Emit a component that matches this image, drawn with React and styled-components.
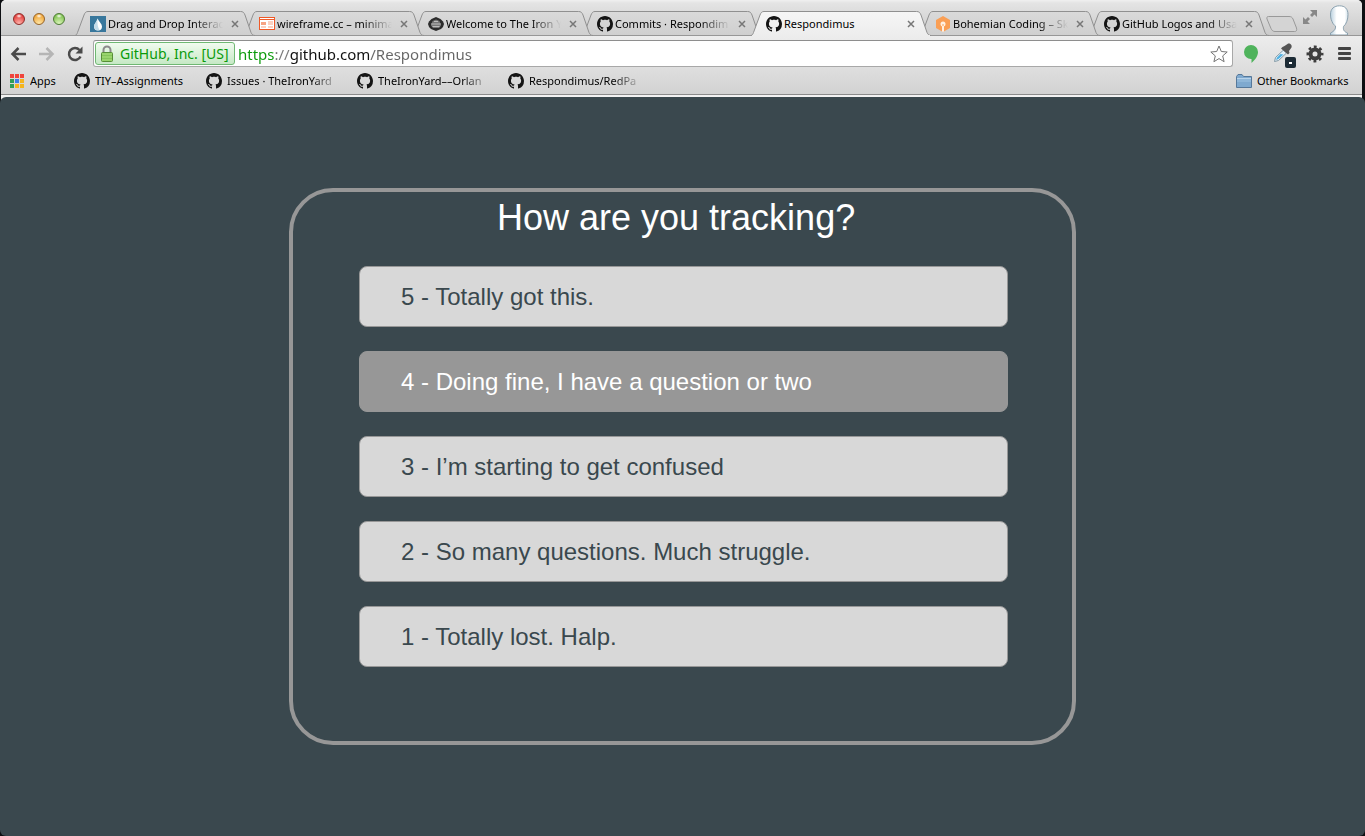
import React, { useState } from "react";
import styled, { createGlobalStyle, css } from "styled-components";

const GlobalStyle = createGlobalStyle`
  * { box-sizing: border-box; }
  body { margin: 0; background: #0d0f12; }
  button { font: inherit; color: inherit; border: 0; padding: 0; background: none; cursor: pointer; }
  a { color: inherit; text-decoration: none; }
`;

const uiFont = `"Noto Sans", "Open Sans", sans-serif`;

const Window = styled.div`
  min-height: 100vh;
  display: flex;
  flex-direction: column;
`;

const Chrome = styled.header`
  height: 104px;
  margin: 0 3px -7px 1px;
  border-radius: 5px 5px 0 0;
  overflow: hidden;
  background: #f2f2f2;
  font-family: ${uiFont};
  font-size: 11px;
  line-height: 16px;
  color: #000;
`;

const TabStrip = styled.div`
  height: 36px;
  display: flex;
  align-items: flex-start;
  padding: 11px 12px 0 0;
  background: linear-gradient(#f0f0f0, #e4e4e4 3px, #c9c9c9);
  box-shadow: inset 0 -1px #979797;
`;

const Lights = styled.div`
  display: flex;
  gap: 8px;
  width: 76px;
  padding: 2px 0 0 12px;
  flex: none;
`;

const lights = {
  red: ["#8c2b28", "#e4423f", "#ffb5ad"],
  amber: ["#96642a", "#f0a83c", "#ffe7a8"],
  green: ["#4d7a35", "#83c455", "#dcf5bb"],
};

const Light = styled.button`
  width: 12px;
  height: 12px;
  border-radius: 50%;
  border: 1px solid ${(p) => lights[p.$tone][0]};
  background:
    radial-gradient(ellipse 3px 2px at 50% 20%, #fff, transparent),
    radial-gradient(circle at 50% 95%, ${(p) => lights[p.$tone][2]}, ${(p) => lights[p.$tone][1]} 75%);
`;

const TabList = styled.nav`
  display: flex;
  flex: 0 1 1183px;
  min-width: 0;
`;

const Tab = styled.div`
  position: relative;
  z-index: ${(p) => p.$z};
  flex: 1 1 169px;
  min-width: 0;
  height: 25px;
  display: flex;
  align-items: center;
  padding: 1px 6px 0 13px;
  gap: 2px;
`;

const TabShape = styled.svg`
  position: absolute;
  left: -2px;
  top: 0;
  z-index: -1;
  width: calc(100% + 12px);
  height: 25px;
`;

const Fade = styled.span`
  flex: 1;
  min-width: 0;
  overflow: hidden;
  white-space: nowrap;
  ${(p) =>
    p.$fade &&
    css`
      mask-image: linear-gradient(to left, transparent, #000 30px);
    `}
`;

const TabLink = styled.a`
  flex: 1;
  min-width: 0;
  display: flex;
  align-items: center;
  gap: 2px;
  margin-right: 6px;
`;

const CloseButton = styled.button`
  width: 9px;
  height: 16px;
  display: flex;
  align-items: center;
  flex: none;
`;

const Icon = styled.svg`
  display: block;
  flex: none;
`;

const NewTab = styled.button`
  margin: 4px 0 0 5px;
  height: 18px;
  flex: none;
`;

const StripEnd = styled.div`
  display: flex;
  gap: 10px;
  margin: -6px 0 0 auto;
  align-items: flex-start;
`;

const Expand = styled.button`
  padding-top: 4px;
`;

const Toolbar = styled.div`
  height: 59px;
  background: linear-gradient(#ededed, #d2d2d2);
  border-bottom: 1px solid #8b8b8b;
`;

const AddressRow = styled.form`
  height: 31px;
  padding: 4px 10px 0 9px;
  display: flex;
  align-items: center;
  margin: 0;
`;

const NavButtons = styled.div`
  display: flex;
  gap: 12px;
  width: 83px;
  flex: none;
`;

const Omnibox = styled.div`
  flex: 1;
  min-width: 0;
  height: 27px;
  display: flex;
  align-items: center;
  padding: 0 4px 0 1px;
  border: 1px solid #a8a8a8;
  border-top-color: #8e8e8e;
  border-radius: 3px;
  background: #fff;
  font-size: 14px;
`;

const Certificate = styled.button`
  height: 23px;
  width: 140px;
  flex: none;
  display: flex;
  align-items: center;
  gap: 7px;
  padding-left: 5px;
  border: 1px solid #6fb873;
  border-radius: 3px;
  background: linear-gradient(#f1fbef, #c6e8c5);
  color: #0a9a0a;
  white-space: nowrap;
`;

const AddressInput = styled.input`
  flex: 1;
  min-width: 0;
  border: 0;
  outline: 0;
  padding: 0 0 0 3px;
  height: 23px;
  font: inherit;
  font-size: 15px;
  color: #111;
  -webkit-text-fill-color: transparent;
  background: linear-gradient(
    to right,
    #0a9a0a 40px,
    #777 40px 55px,
    #111 55px 135px,
    #666 135px
  );
  background-clip: text;
`;

const Extensions = styled.div`
  display: flex;
  align-items: center;
  gap: 10px;
  padding-left: 10px;
  flex: none;
`;

const BookmarkBar = styled.nav`
  height: 27px;
  display: flex;
  align-items: center;
  gap: 16px;
  padding: 1px 10px 0 9px;
`;

const Bookmark = styled.a`
  display: flex;
  align-items: center;
  gap: 5px;
  flex: 0 1 ${(p) => p.$width}px;
  min-width: 0;
  &:last-child {
    margin-left: auto;
    flex-shrink: 0;
  }
`;

const Page = styled.main`
  position: relative;
  flex: 1;
  display: flex;
  flex-direction: column;
  align-items: center;
  padding: 91px 24px;
  border-radius: 6px;
  background: #3a484e;
  font-family: "Liberation Sans", Arial, sans-serif;
`;

const Card = styled.section`
  width: 100%;
  max-width: 787px;
  padding: 4px 64px 74px 66px;
  border: 4px solid #979797;
  border-radius: 44px;
`;

const Title = styled.h1`
  margin: 0;
  padding-left: 138px;
  font-size: 36px;
  line-height: 44px;
  font-weight: 400;
  color: #fff;
`;

const Options = styled.div`
  display: flex;
  flex-direction: column;
  gap: 24px;
  margin-top: 26px;
`;

const Option = styled.button`
  height: 61px;
  padding: 0 0 0 41px;
  text-align: left;
  font-size: 24px;
  border: 1px solid #979797;
  border-radius: 8px;
  background: ${(p) => (p.$active ? "#979797" : "#d8d8d8")};
  color: ${(p) => (p.$active ? "#fff" : "#3a484e")};
`;

const GithubMark = () => (
  <Icon width="16" height="16" viewBox="0 0 16 16" fill="#141414" aria-hidden="true">
    <path d="M8 0C3.58 0 0 3.58 0 8c0 3.54 2.29 6.53 5.47 7.59.4.07.55-.17.55-.38 0-.19-.01-.82-.01-1.49-2.01.37-2.53-.49-2.69-.94-.09-.23-.48-.94-.82-1.13-.28-.15-.68-.52-.01-.53.63-.01 1.08.58 1.23.82.72 1.21 1.87.87 2.33.66.07-.52.28-.87.51-1.07-1.78-.2-3.64-.89-3.64-3.95 0-.87.31-1.59.82-2.15-.08-.2-.36-1.02.08-2.12 0 0 .67-.21 2.2.82.64-.18 1.32-.27 2-.27.68 0 1.36.09 2 .27 1.53-1.04 2.2-.82 2.2-.82.44 1.1.16 1.92.08 2.12.51.56.82 1.27.82 2.15 0 3.07-1.87 3.75-3.65 3.95.29.25.54.73.54 1.48 0 1.07-.01 1.93-.01 2.2 0 .21.15.46.55.38A8.013 8.013 0 0016 8c0-4.42-3.58-8-8-8z" />
  </Icon>
);

const DropIcon = () => (
  <Icon width="16" height="16" viewBox="0 0 16 16" aria-hidden="true">
    <rect width="16" height="16" fill="#38779c" />
    <path d="M7.5 2.5C9 5.500 12 8 12 10.500A4 4 0 0 1 4 10.500C4 8 7 5.500 7.500 2.500z" fill="#fff" />
    <path d="M7.500 2.500C7.500 6 7 10 9.500 14A4 4 0 0 1 4 10.500C4 8 7 5.500 7.500 2.500z" fill="#c3dcea" />
  </Icon>
);

const WireframeIcon = () => (
  <Icon width="16" height="16" viewBox="0 0 16 16" aria-hidden="true">
    <rect x=".5" y="1.500" width="15" height="12" fill="#fff" stroke="#ef5a28" />
    <path d="M1 3.500h14" stroke="#ef5a28" />
    <path d="M2 6h5v3H2zM9 5.500h5v1H9zM9 7.500h5v1H9zM2 10.500h5v1H2zM9 10.500h5v1H9z" fill="#f6a483" />
  </Icon>
);

const IronYardIcon = () => (
  <Icon width="16" height="16" viewBox="0 0 16 16" aria-hidden="true">
    <path d="M8 1l4.500 2L15 5.500l1 2.500-1 3-2 2-5 2-5-2-2-2-1-3 1-2.500L3.500 3z" fill="#2c2c2c" />
    <path d="M4.500 5L8 3.500 11.500 5 13 9.500 11 12H5L3 9.500z" fill="#777" />
    <path d="M3 8h10M4.500 10.500h7M6 5.500h4" stroke="#bdbdbd" />
  </Icon>
);

const BohemianIcon = () => (
  <Icon width="16" height="16" viewBox="0 0 16 16" aria-hidden="true">
    <path d="M8 0l7 4v8l-7 4-7-4V4z" fill="#fa9f55" />
    <circle cx="8" cy="8" r="2.500" fill="#fff0e2" />
    <path d="M7 9h2v6.500l-1 .5-1-.5z" fill="#fff0e2" />
    <path d="M8 8v2" stroke="#fa9f55" />
  </Icon>
);

const AppsIcon = () => {
  const colors = ["#f0443c", "#f0443c", "#f0443c", "#2f9e58", "#3d80e8", "#f5b51e", "#2f9e58", "#f5b51e", "#f5b51e"];
  return (
    <Icon width="15" height="14" viewBox="0 0 15 14" aria-hidden="true">
      {colors.map((c, i) => (
        <rect key={i} x={(i % 3) * 5} y={Math.floor(i / 3) * 5} width="4" height="4" fill={c} />
      ))}
    </Icon>
  );
};

const FolderIcon = () => (
  <Icon width="16" height="14" viewBox="0 0 16 14" aria-hidden="true">
    <path d="M.5 13.500V2.500L2 .5h4l1.500 2h8v11z" fill="#7fa9cf" stroke="#56789a" />
    <path d="M1 4.500h14" stroke="#b8d3ea" />
    <path d="M1 5h14v3H1z" fill="#8fb6d8" />
  </Icon>
);

const tabs = [
  { label: "Drag and Drop Interac", icon: DropIcon },
  { label: "wireframe.cc – minima", icon: WireframeIcon },
  { label: "Welcome to The Iron Y", icon: IronYardIcon },
  { label: "Commits · Respondim", icon: GithubMark },
  { label: "Respondimus", icon: GithubMark, active: true },
  { label: "Bohemian Coding – Sk", icon: BohemianIcon },
  { label: "GitHub Logos and Usa", icon: GithubMark },
];

const bookmarks = [
  { label: "Apps", icon: AppsIcon, width: 48 },
  { label: "TIY–Assignments", icon: GithubMark, width: 116 },
  { label: "Issues · TheIronYard", icon: GithubMark, width: 135, fade: true },
  { label: "TheIronYard––Orlan", icon: GithubMark, width: 135, fade: true },
  { label: "Respondimus/RedPa", icon: GithubMark, width: 135, fade: true },
  { label: "Other Bookmarks", icon: FolderIcon, width: 116 },
];

const options = [
  "5 - Totally got this.",
  "4 - Doing fine, I have a question or two",
  "3 - I’m starting to get confused",
  "2 - So many questions. Much struggle.",
  "1 - Totally lost. Halp.",
];

function BrowserTab({ tab, z }) {
  const TabIcon = tab.icon;
  return (
    <Tab $z={z}>
      <TabShape viewBox="0 0 181 25" preserveAspectRatio="none" aria-hidden="true">
        <defs>
          <linearGradient id={tab.active ? "tabOn" : "tabOff"} x2="0" y2="1">
            <stop stopColor={tab.active ? "#f6f6f6" : "#dadada"} />
            <stop offset="1" stopColor={tab.active ? "#ededed" : "#cfcfcf"} />
          </linearGradient>
        </defs>
        <path
          d="M0 24.500C1.500 24 2 23 2.500 21.500L9 4C10 1.500 11 .5 13 .5H165.500C168 .5 169 1.500 170 4L176 21.500C177 23.500 178 24.500 180 24.500"
          fill={tab.active ? "url(#tabOn)" : "url(#tabOff)"}
          stroke="#909090"
        />
        <path d="M1 24.500H179" stroke={tab.active ? "#ededed" : "#979797"} />
      </TabShape>
      <TabLink href="#">
        <TabIcon />
        <Fade $fade={!tab.active}>{tab.label}</Fade>
      </TabLink>
      <CloseButton type="button" aria-label={`Close ${tab.label}`}>
        <Icon width="8" height="8" viewBox="0 0 8 8" stroke="#777" strokeWidth="1.500">
          <path d="M1 1l6 6M7 1L1 7" />
        </Icon>
      </CloseButton>
    </Tab>
  );
}

export default function App() {
  const [selected, setSelected] = useState(1);
  return (
    <Window>
      <GlobalStyle />
      <Chrome>
        <TabStrip>
          <Lights>
            <Light $tone="red" aria-label="Close window" />
            <Light $tone="amber" aria-label="Minimize window" />
            <Light $tone="green" aria-label="Zoom window" />
          </Lights>
          <TabList>
            {tabs.map((tab, i) => (
              <BrowserTab key={tab.label} tab={tab} z={tab.active ? 20 : 10 - i} />
            ))}
          </TabList>
          <NewTab aria-label="New tab">
            <Icon width="34" height="18" viewBox="0 0 34 18">
              <path d="M3.500 1.500H24C26 1.500 27 2 28 4L31.500 13C32 15.500 31.500 16.500 29.500 16.500H10C8 16.500 7 15.500 6 13.500L2 4C1.500 2.500 2 1.500 3.500 1.500z" fill="#d4d4d4" stroke="#999" />
            </Icon>
          </NewTab>
          <StripEnd>
            <Expand aria-label="Full screen">
              <Icon width="16" height="16" viewBox="0 0 16 16" fill="#888">
                <path d="M8 1h7v7l-2.500-2.500L10 8 8 6l2.500-2.500zM8 15H1V8l2.500 2.500L6 8l2 2-2.500 2.500z" />
              </Icon>
            </Expand>
            <Icon width="22" height="30" viewBox="0 0 22 30" role="img" aria-label="Profile">
              <defs>
                <linearGradient id="face">
                  <stop stopColor="#b9d0de" />
                  <stop offset=".35" stopColor="#fff" />
                  <stop offset=".8" stopColor="#fff" />
                  <stop offset="1" stopColor="#d5e4ec" />
                </linearGradient>
              </defs>
              <path d="M11.500 .8C6 .8 2.500 4 2.500 9c0 3 .3 5 1.500 7.500 1 2.500 2 3.500 3.500 4.500.3 3-1 5-5 7V30h17v-2c-3.500-1.500-4.500-3-4-6.500C18.500 19 20 14 20 9.500 20 4 17 .8 11.500 .8z" fill="url(#face)" stroke="#8aa0ae" />
            </Icon>
          </StripEnd>
        </TabStrip>
        <Toolbar>
          <AddressRow onSubmit={(e) => e.preventDefault()}>
            <NavButtons>
              <button type="button" aria-label="Back">
                <Icon width="16" height="16" viewBox="0 0 16 16" fill="none" stroke="#4b4b4b" strokeWidth="2.500">
                  <path d="M16 8H3M8.500 2L2.500 8l6 6" />
                </Icon>
              </button>
              <button type="button" aria-label="Forward">
                <Icon width="17" height="16" viewBox="0 0 17 16" fill="none" stroke="#b5b5b5" strokeWidth="2.500">
                  <path d="M1 8h13M8.500 2l6 6-6 6" />
                </Icon>
              </button>
              <button type="button" aria-label="Reload">
                <Icon width="16" height="16" viewBox="0 0 16 16" fill="none" stroke="#4b4b4b" strokeWidth="2.500">
                  <path d="M13.500 10.500A6 6 0 1 1 12.500 4" />
                  <path d="M15.500 .5v7h-7z" fill="#4b4b4b" stroke="none" />
                </Icon>
              </button>
            </NavButtons>
            <Omnibox>
              <Certificate type="button">
                <Icon width="12" height="18" viewBox="0 0 12 18">
                  <path d="M2.500 9V5a3.500 3.500 0 0 1 7 0v4" fill="none" stroke="#8b8b8b" strokeWidth="2" />
                  <rect x=".5" y="7.500" width="11" height="9" rx="1" fill="#98d46c" stroke="#568e37" />
                  <path d="M1 10.500h10M1 13.500h10" stroke="#84c45a" />
                </Icon>
                GitHub, Inc. [US]
              </Certificate>
              <AddressInput aria-label="Address" defaultValue="https://github.com/Respondimus" spellCheck="false" />
              <button type="button" aria-label="Bookmark this page">
                <Icon width="18" height="18" viewBox="0 0 18 18" fill="#fff" stroke="#747474" strokeLinejoin="round">
                  <path d="M9 1l2.300 5.500 5.900.5-4.500 3.900 1.400 5.800L9 13.600l-5.100 3.100 1.400-5.800L.8 7l5.900-.5z" />
                </Icon>
              </button>
            </Omnibox>
            <Extensions>
              <button type="button" aria-label="Hangouts">
                <Icon width="16" height="20" viewBox="0 0 16 20" fill="#4fb35c">
                  <path d="M8 1a7 7 0 0 1 7 7c0 4-3 8-6.500 11v-4H8A7 7 0 0 1 8 1z" />
                </Icon>
              </button>
              <button type="button" aria-label="Color picker">
                <Icon width="27" height="28" viewBox="0 0 27 28">
                  <path d="M5.500 21.500l1-4L14.500 10l3 3-8 7.500z" fill="#e4f2fa" stroke="#8199a6" />
                  <path d="M7 20l1-2.500 3.500-3.500 3 .5-5 4.500z" fill="#4fb0e2" />
                  <path d="M13.500 7l2-1 3-2c2-1.500 5 1 4 3.500L20 11l.5 2-1.500 1.500L12 8.500z" fill="#555" />
                  <rect x="16" y="17" width="11" height="11" rx="2" fill="#1c2b35" />
                  <path d="M20 22h3v2h-3z" fill="#fff" />
                </Icon>
              </button>
              <button type="button" aria-label="Extension settings">
                <Icon width="18" height="18" viewBox="0 0 18 18">
                  <circle cx="9" cy="9" r="4.500" fill="none" stroke="#3e3e3e" strokeWidth="4" />
                  <circle cx="9" cy="9" r="7" fill="none" stroke="#3e3e3e" strokeWidth="3" strokeDasharray="2.750 2.750" strokeDashoffset="1.375" />
                </Icon>
              </button>
              <button type="button" aria-label="Menu">
                <Icon width="18" height="16" viewBox="0 0 18 16" fill="#444">
                  <rect x="4" y="1" width="13" height="3" rx="1" />
                  <rect x="4" y="6" width="13" height="3" rx="1" />
                  <rect x="4" y="11" width="13" height="3" rx="1" />
                </Icon>
              </button>
            </Extensions>
          </AddressRow>
          <BookmarkBar>
            {bookmarks.map(({ label, icon: BookmarkIcon, width, fade }) => (
              <Bookmark key={label} href="#" $width={width}>
                <BookmarkIcon />
                <Fade $fade={fade}>{label}</Fade>
              </Bookmark>
            ))}
          </BookmarkBar>
        </Toolbar>
      </Chrome>
      <Page>
        <Card>
          <Title>How are you tracking?</Title>
          <Options>
            {options.map((text, i) => (
              <Option key={text} $active={i === selected} aria-pressed={i === selected} onClick={() => setSelected(i)}>
                {text}
              </Option>
            ))}
          </Options>
        </Card>
      </Page>
    </Window>
  );
}
